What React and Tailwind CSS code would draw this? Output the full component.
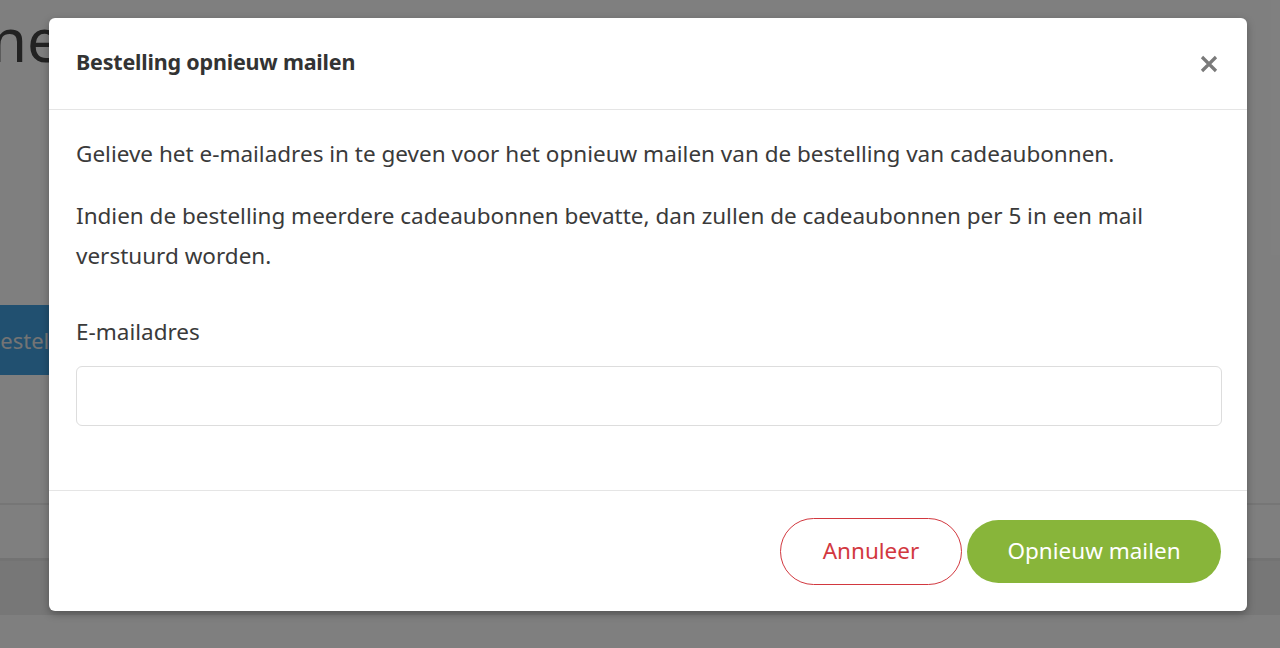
import React from "react";

const font = { fontFamily: "'Noto Sans', 'Open Sans', sans-serif" };

export default function App() {
  return (
    <div className="relative w-[1280px] h-[648px] overflow-hidden bg-white" style={font}>
      {/* page behind the modal */}
      <div className="flex flex-col h-full">
        <div className="h-[300px]">
          <div className="text-[60px] leading-[78px] text-[#444] -ml-[10px]">ne</div>
        </div>
        <div className="h-[70px] w-[140px] -ml-[60px] bg-[#42a1e0] flex items-center pl-[46px] mt-[5px]">
          <span className="text-[22px] text-[#e8e8e8] whitespace-nowrap">Bestel</span>
        </div>
        <div className="h-[128px]" />
        <div className="h-[2px] bg-[#ececec]" />
        <div className="h-[53px]" />
        <div className="h-[3px] bg-[#e6e6e6]" />
        <div className="h-[54px] bg-[#eeeeee]" />
      </div>

      {/* overlay */}
      <div className="absolute inset-0 bg-black/50">
        <div className="ml-[49px] mt-[18px] w-[1198px] bg-white rounded-[6px] shadow-[0_3px_9px_rgba(0,0,0,0.3)] text-[#3a3a3a]">
          <div className="h-[92px] flex items-center justify-between pl-[27px] pr-[27px] border-b border-[#e5e5e5]">
            <h4 className="text-[21.5px] font-bold text-[#333] tracking-[-0.2px] -mt-[2px]">Bestelling opnieuw mailen</h4>
            <button className="w-[22px] h-[22px] flex items-center justify-center">
              <svg width="20" height="20" viewBox="0 0 20 20">
                <path d="M3 3 L17 17 M17 3 L3 17" stroke="#7a7a7a" strokeWidth="3.2" strokeLinecap="butt" />
              </svg>
            </button>
          </div>
          <div className="px-[27px] pt-[24px] pb-[64px] text-[22.5px] leading-[40px]">
            <p>Gelieve het e-mailadres in te geven voor het opnieuw mailen van de bestelling van cadeaubonnen.</p>
            <p className="mt-[22px]">
              Indien de bestelling meerdere cadeaubonnen bevatte, dan zullen de cadeaubonnen per 5 in een mail verstuurd worden.
            </p>
            <div className="mt-[36px]">
              <label className="block">E-mailadres</label>
              <input
                type="email"
                className="mt-[14px] block w-[1146px] h-[60px] rounded-[6px] border border-[#dddddd] px-3 outline-none"
              />
            </div>
          </div>
          <div className="h-[121px] border-t border-[#e5e5e5] flex items-center justify-end gap-[5px] pr-[26px]">
            <button className="w-[182px] h-[67px] rounded-full border border-[#d2383f] text-[#d2383f] text-[22.5px]">
              Annuleer
            </button>
            <button className="w-[254px] h-[63px] rounded-full bg-[#88b53a] text-white text-[22.5px]">
              Opnieuw mailen
            </button>
          </div>
        </div>
      </div>
    </div>
  );
}
